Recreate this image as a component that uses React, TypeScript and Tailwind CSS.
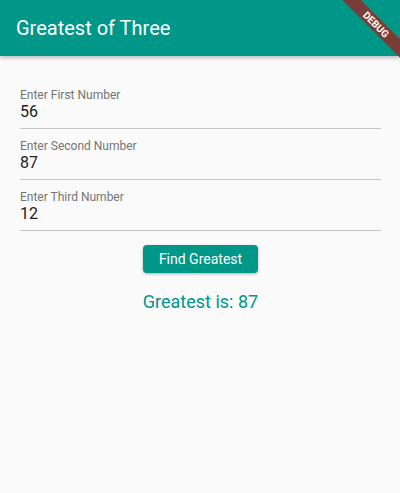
export default function App() {
  const fields = [
    { label: "Enter First Number", value: "56" },
    { label: "Enter Second Number", value: "87" },
    { label: "Enter Third Number", value: "12" },
  ];

  return (
    <div
      className="relative w-[400px] h-[493px] overflow-hidden bg-[#fafafa]"
      style={{ fontFamily: "Roboto, 'Noto Sans', sans-serif" }}
    >
      {/* App bar */}
      <div className="relative z-10 h-[56px] bg-[#009688] flex items-center px-4 shadow-[0_2px_4px_rgba(0,0,0,0.25)]">
        <span className="text-white text-[20px] font-normal">Greatest of Three</span>
      </div>

      {/* Debug banner */}
      <div className="absolute top-0 right-0 z-20 w-[80px] h-[80px] overflow-hidden pointer-events-none">
        <div className="absolute top-[18px] left-[6px] w-[100px] h-[13px] rotate-45 bg-[#7a3c36] flex items-center justify-center">
          <span className="text-white text-[10px] font-bold leading-none">DEBUG</span>
        </div>
      </div>

      {/* Form */}
      <div className="pl-5 pr-[19px] pt-[32px] flex flex-col">
        {fields.map((f, i) => (
          <div key={f.label} className={i > 0 ? "mt-[10px]" : ""}>
            <div className="text-[12px] leading-[14px] text-[#757575]">{f.label}</div>
            <div className="text-[16px] leading-[19px] text-[#212121] pb-[7px] border-b border-[#c4c4c4]">
              {f.value}
            </div>
          </div>
        ))}

        <div className="flex justify-center mt-[14px]">
          <button className="h-[28px] px-4 rounded-[4px] bg-[#009688] text-white text-[14px] font-normal shadow-[0_1px_3px_rgba(0,0,0,0.3)]">
            Find Greatest
          </button>
        </div>

        <div className="text-center text-[18px] text-[#009688] mt-[15px]">Greatest is: 87</div>
      </div>
    </div>
  );
}
